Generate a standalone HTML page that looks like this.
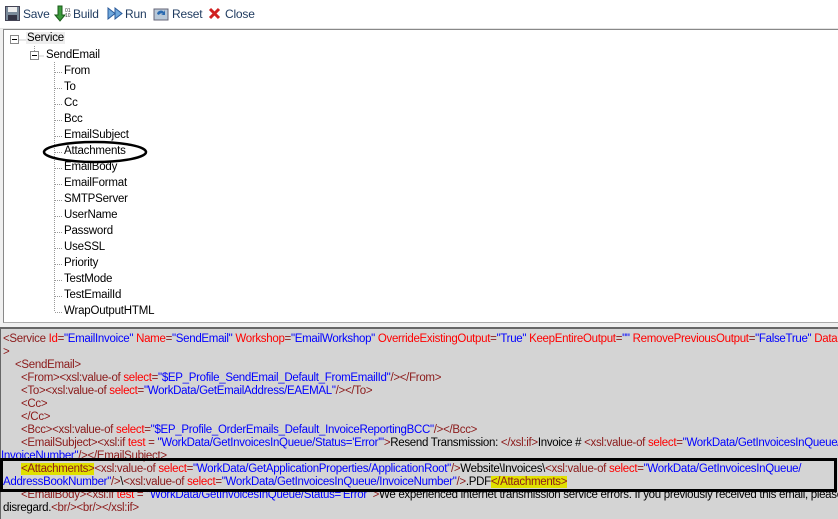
<!DOCTYPE html>
<html><head><style>
body{margin:0;width:838px;height:517px;overflow:hidden;background:#f0f0f0;font-family:"Liberation Sans",sans-serif;font-size:12px;position:relative}
.tb{position:absolute;top:0;left:0;width:838px;height:28px;background:#fff;border-bottom:1px solid #e3e3e3}
.tb span{position:absolute;top:7px;color:#1e3a5f;font-size:12px;letter-spacing:-0.2px}
.tree{position:absolute;left:3px;top:29px;width:835px;height:292px;background:#fff;border-left:1px solid #888;border-top:1px solid #888;border-bottom:1px solid #aaa}
.it{position:absolute;font-size:11.5px;color:#000;white-space:nowrap;letter-spacing:-0.2px}
.code{position:absolute;left:0;top:327px;width:838px;height:190px;background:#d4d4d4;border-top:2px solid #666;border-left:1px solid #666}
.l{position:absolute;white-space:nowrap;font-size:11.5px;letter-spacing:-0.3px;color:#000}
.t{color:#8b1a1a}.a{color:#f00}.v{color:#00f}.h{background:#e0e000}
</style></head><body>
<div class="tb">
<svg style="position:absolute;left:5px;top:6px" width="15" height="15"><rect x="0.5" y="0.5" width="14" height="14" fill="#7a8a9a" stroke="#445"/><rect x="3" y="1" width="9" height="5" fill="#eee"/><rect x="3" y="9" width="9" height="5" fill="#334"/></svg><span style="left:23px">Save</span>
<svg style="position:absolute;left:54px;top:5px" width="18" height="17"><path d="M4 1v9H1l5 6 5-6H8V1z" fill="#3a9a3a" stroke="#1a5a1a"/><text x="11" y="7" font-size="5" fill="#333">01</text><text x="11" y="12" font-size="5" fill="#333">10</text></svg><span style="left:73px">Build</span>
<svg style="position:absolute;left:107px;top:7px" width="16" height="13"><path d="M1 1l7 5.5L1 12zM8 1l7 5.5L8 12z" fill="#6fa8dc" stroke="#2a5a9a"/></svg><span style="left:125px">Run</span>
<svg style="position:absolute;left:153px;top:6px" width="16" height="16"><rect x="1" y="3" width="14" height="11" fill="#b8c8d8" stroke="#667"/><path d="M4 8a4 4 0 0 1 7-2l1-2v5H8l2-1a2.5 2.5 0 0 0-4 1z" fill="#2a6ab0"/></svg><span style="left:172px">Reset</span>
<svg style="position:absolute;left:208px;top:7px" width="13" height="13"><path d="M2 2l9 9M11 2l-9 9" stroke="#d02020" stroke-width="3"/></svg><span style="left:225px">Close</span>
</div>
<div class="tree">
<svg style="position:absolute;left:0;top:0" width="200" height="292">
<g stroke="#999" stroke-dasharray="1,1" fill="none">
<line x1="10.5" y1="10" x2="22" y2="10"/>
<line x1="30.5" y1="16" x2="30.5" y2="26"/>
<line x1="30.5" y1="26" x2="40" y2="26"/>
<line x1="50.5" y1="32" x2="50.5" y2="282"/>
</g>
<rect x="6.5" y="5.5" width="8" height="8" fill="#fff" stroke="#888"/><line x1="8" y1="9.5" x2="13" y2="9.5" stroke="#000"/>
<rect x="26.5" y="21.5" width="8" height="8" fill="#fff" stroke="#888"/><line x1="28" y1="25.5" x2="33" y2="25.5" stroke="#000"/>
<g stroke="#999" stroke-dasharray="1,1">
<line x1="51" y1="42.5" x2="59" y2="42.5"/><line x1="51" y1="58.5" x2="59" y2="58.5"/><line x1="51" y1="74.5" x2="59" y2="74.5"/><line x1="51" y1="90.5" x2="59" y2="90.5"/><line x1="51" y1="106.5" x2="59" y2="106.5"/><line x1="51" y1="122.5" x2="59" y2="122.5"/><line x1="51" y1="138.5" x2="59" y2="138.5"/><line x1="51" y1="154.5" x2="59" y2="154.5"/><line x1="51" y1="170.5" x2="59" y2="170.5"/><line x1="51" y1="186.5" x2="59" y2="186.5"/><line x1="51" y1="202.5" x2="59" y2="202.5"/><line x1="51" y1="218.5" x2="59" y2="218.5"/><line x1="51" y1="234.5" x2="59" y2="234.5"/><line x1="51" y1="250.5" x2="59" y2="250.5"/><line x1="51" y1="266.5" x2="59" y2="266.5"/><line x1="51" y1="282.5" x2="59" y2="282.5"/>
</g>
<ellipse cx="91" cy="122" rx="51" ry="10" fill="none" stroke="#000" stroke-width="2.5"/>
</svg>
<div class="it" style="left:22px;top:2px;background:#eee;padding:0 1px">Service</div>
<div class="it" style="left:42px;top:19px">SendEmail</div>
<div class="it" style="left:60px;top:35px">From</div>
<div class="it" style="left:60px;top:51px">To</div>
<div class="it" style="left:60px;top:67px">Cc</div>
<div class="it" style="left:60px;top:83px">Bcc</div>
<div class="it" style="left:60px;top:99px">EmailSubject</div>
<div class="it" style="left:60px;top:115px">Attachments</div>
<div class="it" style="left:60px;top:131px">EmailBody</div>
<div class="it" style="left:60px;top:147px">EmailFormat</div>
<div class="it" style="left:60px;top:163px">SMTPServer</div>
<div class="it" style="left:60px;top:179px">UserName</div>
<div class="it" style="left:60px;top:195px">Password</div>
<div class="it" style="left:60px;top:211px">UseSSL</div>
<div class="it" style="left:60px;top:227px">Priority</div>
<div class="it" style="left:60px;top:243px">TestMode</div>
<div class="it" style="left:60px;top:259px">TestEmailId</div>
<div class="it" style="left:60px;top:275px">WrapOutputHTML</div>
</div>
<div class="code">
<div class="l" style="left:2px;top:4px"><span class="t">&lt;Service</span> <span class="a">Id</span><span class="t">=</span><span class="v">"EmailInvoice"</span> <span class="a">Name</span><span class="t">=</span><span class="v">"SendEmail"</span> <span class="a">Workshop</span><span class="t">=</span><span class="v">"EmailWorkshop"</span> <span class="a">OverrideExistingOutput</span><span class="t">=</span><span class="v">"True"</span> <span class="a">KeepEntireOutput</span><span class="t">=</span><span class="v">""</span> <span class="a">RemovePreviousOutput</span><span class="t">=</span><span class="v">"FalseTrue"</span> <span class="a">DataKey</span></div>
<div class="l" style="left:2px;top:17px"><span class="t">&gt;</span></div>
<div class="l" style="left:14px;top:30px"><span class="t">&lt;SendEmail&gt;</span></div>
<div class="l" style="left:20px;top:43px"><span class="t">&lt;From&gt;&lt;xsl:value-of</span> <span class="a">select</span><span class="t">=</span><span class="v">"$EP_Profile_SendEmail_Default_FromEmailId"</span><span class="t">/&gt;&lt;/From&gt;</span></div>
<div class="l" style="left:20px;top:56px"><span class="t">&lt;To&gt;&lt;xsl:value-of</span> <span class="a">select</span><span class="t">=</span><span class="v">"WorkData/GetEmailAddress/EAEMAL"</span><span class="t">/&gt;&lt;/To&gt;</span></div>
<div class="l" style="left:20px;top:69px"><span class="t">&lt;Cc&gt;</span></div>
<div class="l" style="left:20px;top:82px"><span class="t">&lt;/Cc&gt;</span></div>
<div class="l" style="left:20px;top:95px"><span class="t">&lt;Bcc&gt;&lt;xsl:value-of</span> <span class="a">select</span><span class="t">=</span><span class="v">"$EP_Profile_OrderEmails_Default_InvoiceReportingBCC"</span><span class="t">/&gt;&lt;/Bcc&gt;</span></div>
<div class="l" style="left:20px;top:108px"><span class="t">&lt;EmailSubject&gt;&lt;xsl:if</span> <span class="a">test</span> <span class="t">=</span> <span class="v">"WorkData/GetInvoicesInQueue/Status='Error'"</span><span class="t">&gt;</span>Resend Transmission: <span class="t">&lt;/xsl:if&gt;</span>Invoice # <span class="t">&lt;xsl:value-of</span> <span class="a">select</span><span class="t">=</span><span class="v">"WorkData/GetInvoicesInQueue/</span></div>
<div class="l" style="left:0px;top:121px"><span class="v">InvoiceNumber"</span><span class="t">/&gt;&lt;/EmailSubject&gt;</span></div>
<div class="l" style="left:20px;top:134px"><span class="t h">&lt;Attachments&gt;</span><span class="t">&lt;xsl:value-of</span> <span class="a">select</span><span class="t">=</span><span class="v">"WorkData/GetApplicationProperties/ApplicationRoot"</span><span class="t">/&gt;</span>Website\Invoices\<span class="t">&lt;xsl:value-of</span> <span class="a">select</span><span class="t">=</span><span class="v">"WorkData/GetInvoicesInQueue/</span></div>
<div class="l" style="left:2px;top:147px"><span class="v">AddressBookNumber"</span><span class="t">/&gt;</span>\<span class="t">&lt;xsl:value-of</span> <span class="a">select</span><span class="t">=</span><span class="v">"WorkData/GetInvoicesInQueue/InvoiceNumber"</span><span class="t">/&gt;</span>.PDF<span class="t h">&lt;/Attachments&gt;</span></div>
<div class="l" style="left:20px;top:160px"><span class="t">&lt;EmailBody&gt;&lt;xsl:if</span> <span class="a">test</span> <span class="t">=</span> <span class="v">"WorkData/GetInvoicesInQueue/Status='Error'"</span><span class="t">&gt;</span>We experienced internet transmission service errors. If you previously received this email, please</div>
<div class="l" style="left:2px;top:173px">disregard.<span class="t">&lt;br/&gt;&lt;br/&gt;&lt;/xsl:if&gt;</span></div>
<div style="position:absolute;left:-1px;top:129px;width:831px;height:28px;border:3px solid #000"></div>
</div>
</body></html>
